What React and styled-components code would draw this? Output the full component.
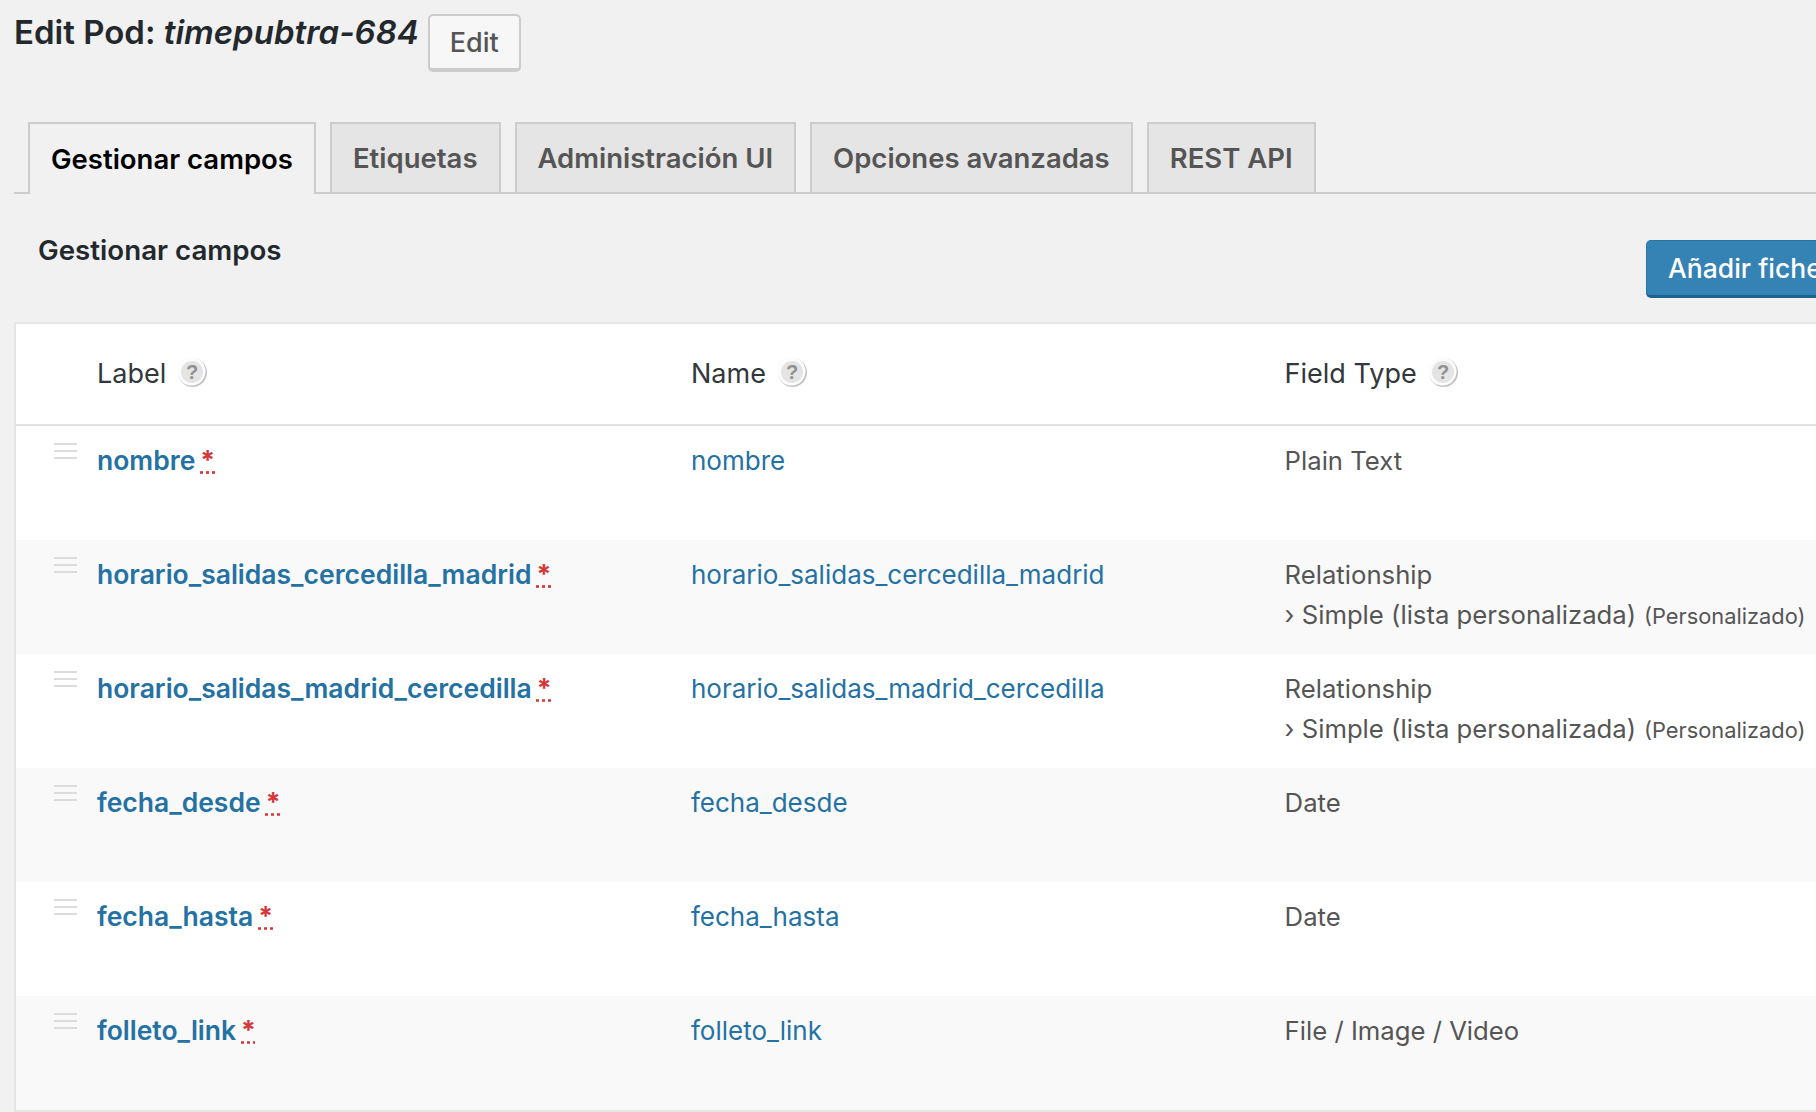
import styled, { createGlobalStyle } from "styled-components";

const GlobalStyle = createGlobalStyle`
  html, body {
    margin: 0;
    height: 1112px;
    overflow: hidden;
    background: #f1f1f1;
  }
  body {
    font-family: "Inter", "Liberation Sans", sans-serif;
    color: #32373c;
  }
`;

const Wrap = styled.div`
  width: 1900px;
  box-sizing: border-box;
  padding: 14px 33px 0 14px;
`;

const TitleRow = styled.div`
  display: flex;
  align-items: flex-start;
  gap: 9px;
  height: 108px;
`;

const Title = styled.h1`
  margin: 0;
  font-size: 33px;
  line-height: 36px;
  font-weight: 600;
  color: #23282d;
  white-space: nowrap;
`;

const EditButton = styled.button`
  width: 93px;
  height: 58px;
  box-sizing: border-box;
  background: #f7f7f7;
  border: 2px solid #ccc;
  border-bottom-width: 4px;
  border-radius: 5px;
  font: 500 27px "Inter", sans-serif;
  color: #555;
  padding: 0;
`;

const Tabs = styled.div`
  display: flex;
  gap: 14px;
  height: 72px;
  box-sizing: border-box;
  padding-left: 14px;
  border-bottom: 2px solid #ccc;
`;

const Tab = styled.a`
  height: 72px;
  box-sizing: border-box;
  padding: 0 21px 1px;
  display: flex;
  align-items: center;
  font-size: 27.5px;
  font-weight: 600;
  white-space: nowrap;
  border: 2px solid #ccc;
  border-bottom: ${(p) => (p.$active ? "none" : "2px solid #ccc")};
  background: ${(p) => (p.$active ? "#f1f1f1" : "#e5e5e5")};
  color: ${(p) => (p.$active ? "#000" : "#555")};
`;

const Toolbar = styled.div`
  display: flex;
  justify-content: space-between;
  align-items: flex-start;
  height: 128px;
  padding: 39px 0 0 24px;
  box-sizing: border-box;
`;

const SectionTitle = styled.h2`
  margin: 0;
  font-size: 27.7px;
  line-height: 34px;
  font-weight: 600;
  color: #23282d;
`;

const AddButton = styled.button`
  margin-top: 7px;
  width: 221px;
  height: 58px;
  box-sizing: border-box;
  background: #3582b5;
  border: 1px solid #2a74a6;
  border-bottom: 3px solid #20628f;
  border-radius: 5px;
  color: #fff;
  font: 500 26.5px "Inter", sans-serif;
  text-align: left;
  white-space: nowrap;
  padding: 0 0 0 21px;
`;

const FieldTable = styled.div`
  background: #fff;
  border: 2px solid #e5e5e5;
  border-right: none;
`;

const Columns = styled.div`
  display: grid;
  grid-template-columns: 81px 594px 593.6px 1fr;
`;

const HeadRow = styled(Columns)`
  height: 102px;
  box-sizing: border-box;
  border-bottom: 2px solid #e1e1e1;
  align-items: center;
`;

const HeadCell = styled.div`
  display: flex;
  align-items: center;
  gap: 11px;
  font-size: 27px;
  color: #32373c;
  padding-bottom: 1px;
`;

const HelpSvg = styled.svg`
  margin-bottom: 3px;
`;

const DragSvg = styled.svg`
  display: block;
`;

const Row = styled(Columns)`
  height: 114px;
  box-sizing: border-box;
  padding-top: 16px;
  background: ${(p) => (p.$alt ? "#f9f9f9" : "#fff")};
`;

const HandleCell = styled.div`
  padding: 1px 0 0 38px;
`;

const LabelCell = styled.div`
  font-size: 26.5px;
  line-height: 38px;
  margin-top: -1px;
`;

const LabelLink = styled.a`
  font-weight: 600;
  color: #2471a3;
`;

const NameLink = styled.a`
  font-size: 26px;
  line-height: 38px;
  color: #2471a3;
`;

const Required = styled.abbr`
  margin-left: 5px;
  color: #d63638;
  font-weight: 700;
  text-decoration: underline dotted #d63638;
  text-underline-offset: 1px;
`;

const TypeCell = styled.div`
  font-size: 25.7px;
  line-height: 40px;
  margin-top: -1px;
  color: #555;
  white-space: nowrap;
`;

const Pick = styled.small`
  margin-left: 8px;
  font-size: 21.8px;
`;

const HelpIcon = () => (
  <HelpSvg width="30" height="32" viewBox="0 0 30 32">
    <circle cx="15.5" cy="16.5" r="14.5" fill="#c2c2c2" />
    <circle cx="14.5" cy="15.5" r="14" fill="#fcfcfc" />
    <circle cx="15" cy="16" r="11" fill="#e4e4e4" />
    <text x="15" y="23" textAnchor="middle" fontSize="20" fontWeight="700" fontFamily="Liberation Sans, sans-serif" fill="#919191">?</text>
  </HelpSvg>
);

const DragIcon = () => (
  <DragSvg width="23" height="17" viewBox="0 0 23 17">
    <path d="M0 1h23M0 8h23M0 15h23" stroke="#dcdcdc" strokeWidth="2" />
  </DragSvg>
);

const fields = [
  { label: "nombre", type: "Plain Text" },
  { label: "horario_salidas_cercedilla_madrid", type: "Relationship", sub: true },
  { label: "horario_salidas_madrid_cercedilla", type: "Relationship", sub: true },
  { label: "fecha_desde", type: "Date" },
  { label: "fecha_hasta", type: "Date" },
  { label: "folleto_link", type: "File / Image / Video" },
];

const tabs = ["Gestionar campos", "Etiquetas", "Administración UI", "Opciones avanzadas", "REST API"];

export default function App() {
  return (
    <Wrap>
      <GlobalStyle />
      <TitleRow>
        <Title>
          Edit Pod: <em>timepubtra-684</em>
        </Title>
        <EditButton>Edit</EditButton>
      </TitleRow>

      <Tabs>
        {tabs.map((tab, i) => (
          <Tab key={tab} $active={i === 0}>
            {tab}
          </Tab>
        ))}
      </Tabs>

      <Toolbar>
        <SectionTitle>Gestionar campos</SectionTitle>
        <AddButton>Añadir fichero</AddButton>
      </Toolbar>

      <FieldTable>
        <HeadRow>
          <div />
          <HeadCell>Label <HelpIcon /></HeadCell>
          <HeadCell>Name <HelpIcon /></HeadCell>
          <HeadCell>Field Type <HelpIcon /></HeadCell>
        </HeadRow>
        {fields.map((f, i) => (
          <Row key={f.label} $alt={i % 2 === 1}>
            <HandleCell><DragIcon /></HandleCell>
            <LabelCell>
              <LabelLink>{f.label}</LabelLink>
              <Required title="required">*</Required>
            </LabelCell>
            <div>
              <NameLink>{f.label}</NameLink>
            </div>
            <TypeCell>
              {f.type}
              {f.sub && (
                <div>
                  › Simple (lista personalizada)<Pick>(Personalizado)</Pick>
                </div>
              )}
            </TypeCell>
          </Row>
        ))}
      </FieldTable>
    </Wrap>
  );
}
